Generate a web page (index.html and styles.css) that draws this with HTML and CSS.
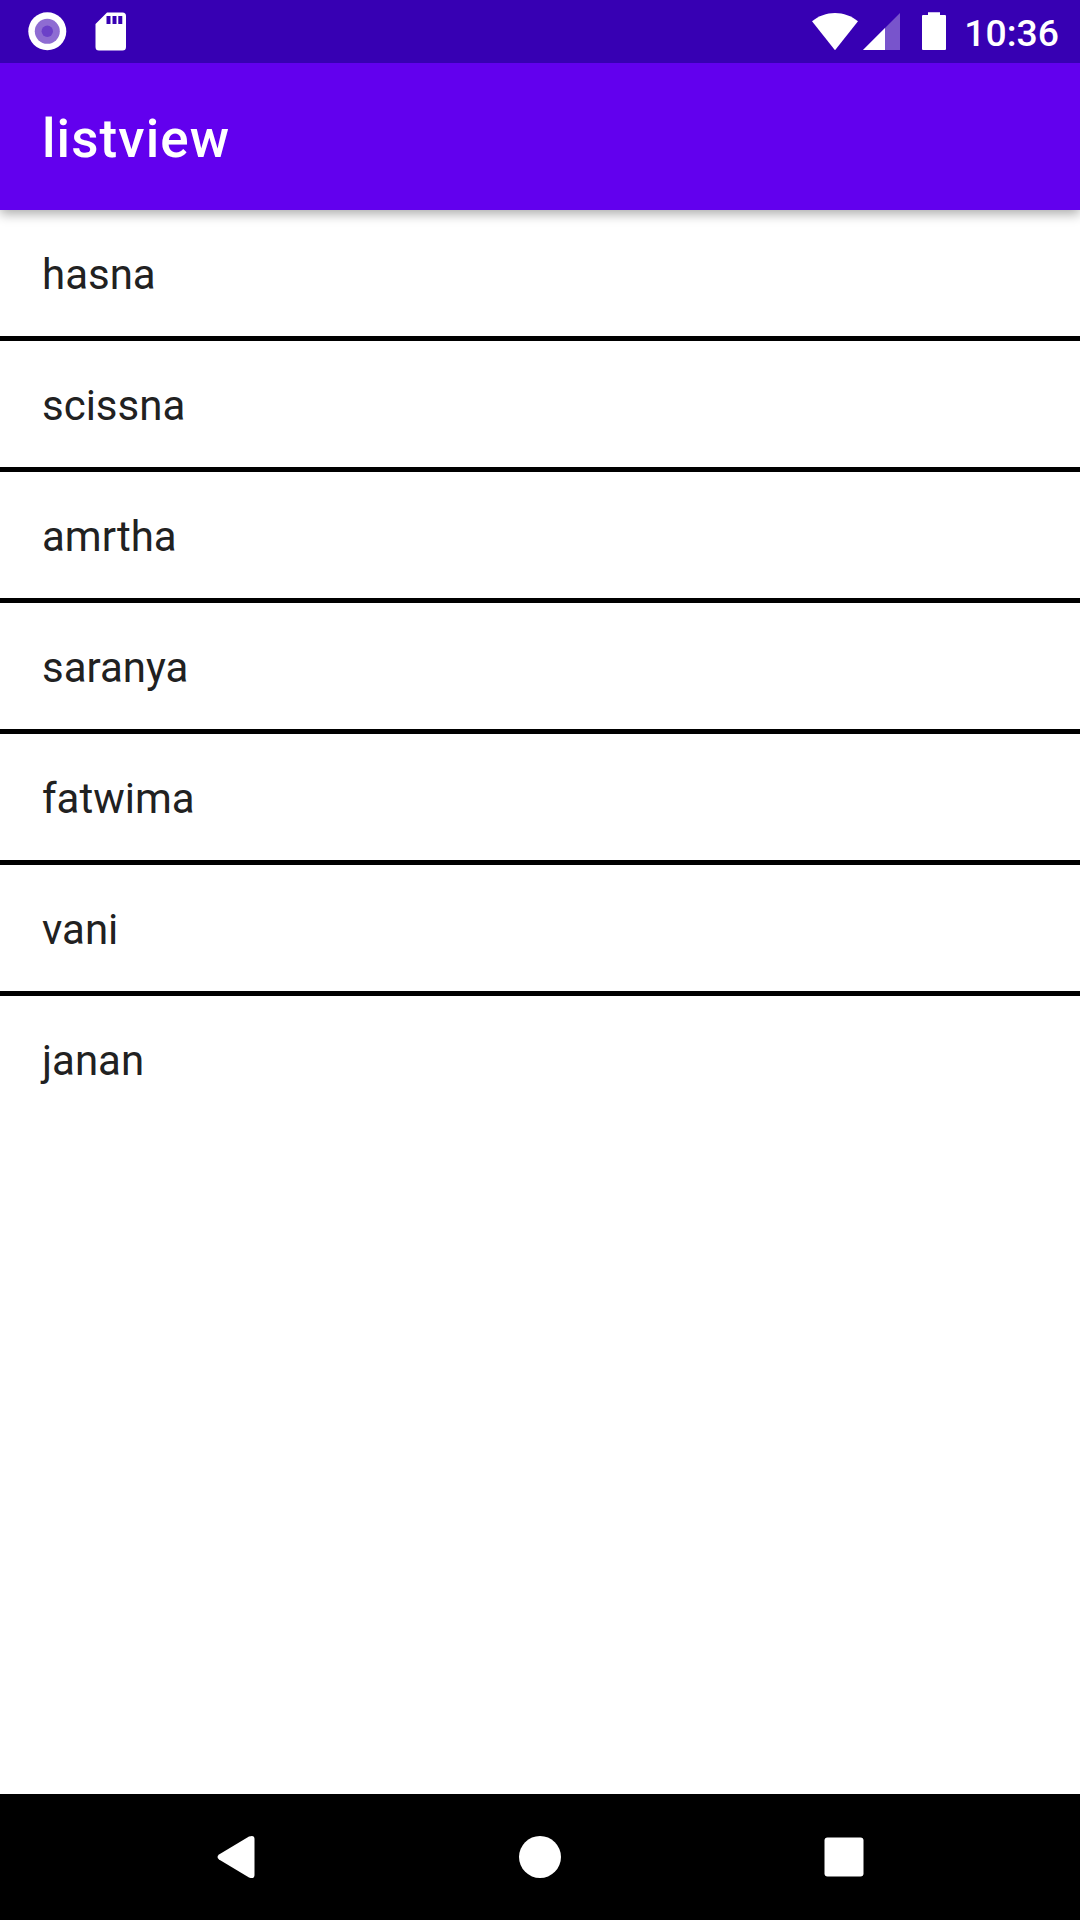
FILE: index.html
```html
<!DOCTYPE html>
<html lang="en">
<head>
<meta charset="utf-8">
<title>listview</title>
<link rel="stylesheet" href="styles.css">
</head>
<body>
<div class="status">
  <div class="notifications">
    <svg width="40" height="63" viewBox="0 0 40 63"><circle cx="20.3" cy="31.3" r="19" fill="#fff"/><circle cx="20.3" cy="31.3" r="12.5" fill="#8e6cd2"/><circle cx="20.3" cy="31.3" r="5.7" fill="#6b40c8"/></svg>
    <svg width="32" height="63" viewBox="0 0 32 63"><path fill="#fff" fill-rule="evenodd" d="M12 12.5H27.5a3.5 3.5 0 0 1 3.500 3.500V47a3.500 3.500 0 0 1-3.500 3.500H4A3.500 3.500 0 0 1 .5 47V24ZM11.500 16v8h4V16ZM17.500 16v8h4V16ZM23.300 16v8h4V16Z"/></svg>
  </div>
  <div class="system">
    <svg class="wifi" width="46" height="63" viewBox="0 0 46 63"><path fill="#fff" d="M23 50.300 0 21.300C6.500 16 14.500 13 23 13S39.500 16 46 21.300Z"/></svg>
    <svg class="signal" width="37" height="63" viewBox="0 0 37 63"><path fill="#fff" opacity=".33" d="M37 13V50H0Z"/><path fill="#fff" d="M22 28V50H0Z"/></svg>
    <svg class="battery" width="24" height="63" viewBox="0 0 24 63"><path fill="#fff" d="M6 12.300H18V15H23Q24 15 24 16V49Q24 50 23 50H1Q0 50 0 49V16Q0 15 1 15H6Z"/></svg>
    <span class="clock">10:36</span>
  </div>
</div>
<header class="appbar"><h1>listview</h1></header>
<ul class="list">
  <li>hasna</li><li>scissna</li><li>amrtha</li><li>saranya</li><li>fatwima</li><li>vani</li><li>janan</li>
</ul>
<nav class="nav">
  <svg width="38" height="44" viewBox="0 0 38 44"><path fill="#fff" d="M2 19.500 32 1.500Q37.500-.5 37.500 4V40Q37.500 44.500 32 42.500L2 24.500Q-1 22 2 19.500Z"/></svg>
  <svg width="42" height="42" viewBox="0 0 42 42"><circle cx="21" cy="21" r="21" fill="#fff"/></svg>
  <svg width="40" height="40" viewBox="0 0 40 40"><rect x=".5" y=".5" width="39" height="39" rx="3" fill="#fff"/></svg>
</nav>
</body>
</html>
```
FILE: styles.css
```css
body { margin: 0; height: 1920px; display: flex; flex-direction: column; background: #fff; font-family: Roboto, sans-serif; }
svg { display: block; flex: none; }
.status { position: relative; z-index: 1; box-sizing: border-box; height: 63px; padding: 0 21px 0 27px; display: flex; align-items: center; justify-content: space-between; background: #3700b3; color: #fff; }
.notifications { display: flex; gap: 28px; }
.system { display: flex; align-items: center; }
.signal { margin-left: 5px; }
.battery { margin-left: 22px; }
.clock { width: 95px; margin-left: 18px; padding-top: 3px; font-size: 37.3px; font-weight: 500; text-align: right; }
.appbar { position: relative; box-sizing: border-box; height: 147px; display: flex; align-items: center; padding: 5px 0 0 42px; background: #6200ee; color: #fff; box-shadow: 0 4px 11px rgba(0,0,0,.33); }
h1 { margin: 0; font-size: 53px; font-weight: 500; letter-spacing: 1.1px; }
.list { flex: 1; margin: 0; padding: 0; list-style: none; }
.list li { box-sizing: border-box; height: 126px; display: flex; align-items: center; padding: 2px 0 0 42px; font-size: 42px; color: #212121; }
.list li + li { height: 131px; border-top: 5px solid #000; }
.nav { box-sizing: border-box; height: 126px; background: #000; display: flex; align-items: center; justify-content: space-between; padding: 0 216px 0 217px; }
```
